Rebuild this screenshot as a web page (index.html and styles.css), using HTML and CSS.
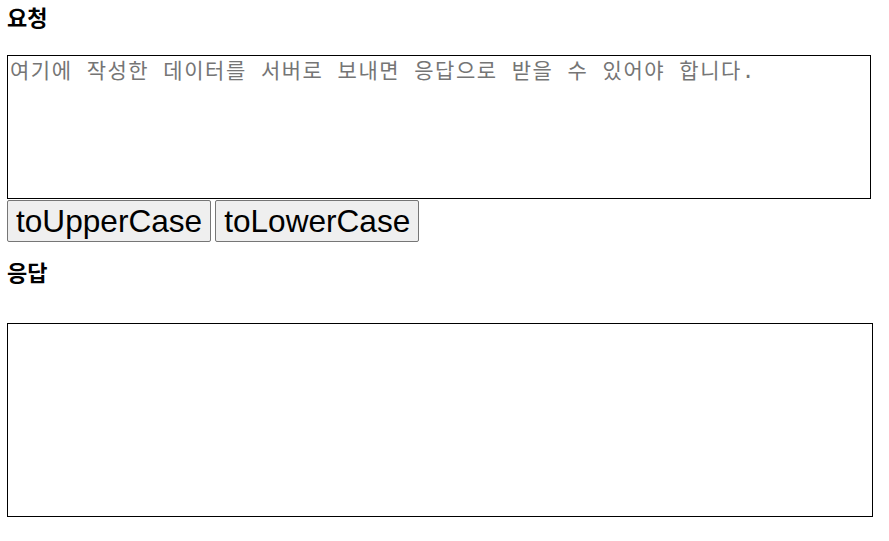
FILE: index.html
```html
<!DOCTYPE html>
<html lang="ko">
<head>
<meta charset="utf-8">
<title>요청 / 응답</title>
<link rel="stylesheet" href="styles.css">
</head>
<body>
<main class="page">
  <h3 class="title title-request">요청</h3>
  <textarea class="request" placeholder="여기에 작성한 데이터를 서버로 보내면 응답으로 받을 수 있어야 합니다."></textarea>
  <div class="actions">
    <button class="btn" type="button">toUpperCase</button>
    <button class="btn" type="button">toLowerCase</button>
  </div>
  <h3 class="title title-response">응답</h3>
  <div class="response"></div>
</main>
</body>
</html>
```

FILE: styles.css
```css
html, body {
  margin: 0;
  padding: 0;
  background: #ffffff;
}

.page {
  display: flex;
  flex-direction: column;
  align-items: flex-start;
  padding: 7px 0 0 7px;
  font-family: "Liberation Sans", "Noto Sans CJK KR", sans-serif;
  color: #000;
}

.title {
  margin: 0;
  font-size: 22px;
  line-height: 24px;
  font-weight: bold;
  padding-left: 0;
}

.title-request {
  margin-bottom: 24px;
}

.title-response {
  margin-top: 20px;
  margin-bottom: 37px;
}

.request {
  box-sizing: border-box;
  width: 864px;
  height: 144px;
  margin: 0;
  padding: 2px 2px;
  border: 1px solid #000;
  resize: none;
  font-family: "DejaVu Sans Mono", "Noto Sans CJK KR", monospace;
  font-size: 21px;
  letter-spacing: 1.52px;
  line-height: 26px;
  color: #000;
  background: #fff;
}

.request::placeholder {
  color: #757575;
}

.actions {
  display: flex;
  gap: 4px;
  margin-top: 1px;
}

.btn {
  box-sizing: border-box;
  height: 42px;
  margin: 0;
  padding: 0 8px;
  border: 1px solid #767676;
  border-radius: 2px;
  background: #efefef;
  color: #000;
  font-family: "Liberation Sans", Arial, sans-serif;
  font-size: 31.6px;
  line-height: 36px;
}

.response {
  box-sizing: border-box;
  width: 866px;
  height: 194px;
  border: 1px solid #000;
}
```
